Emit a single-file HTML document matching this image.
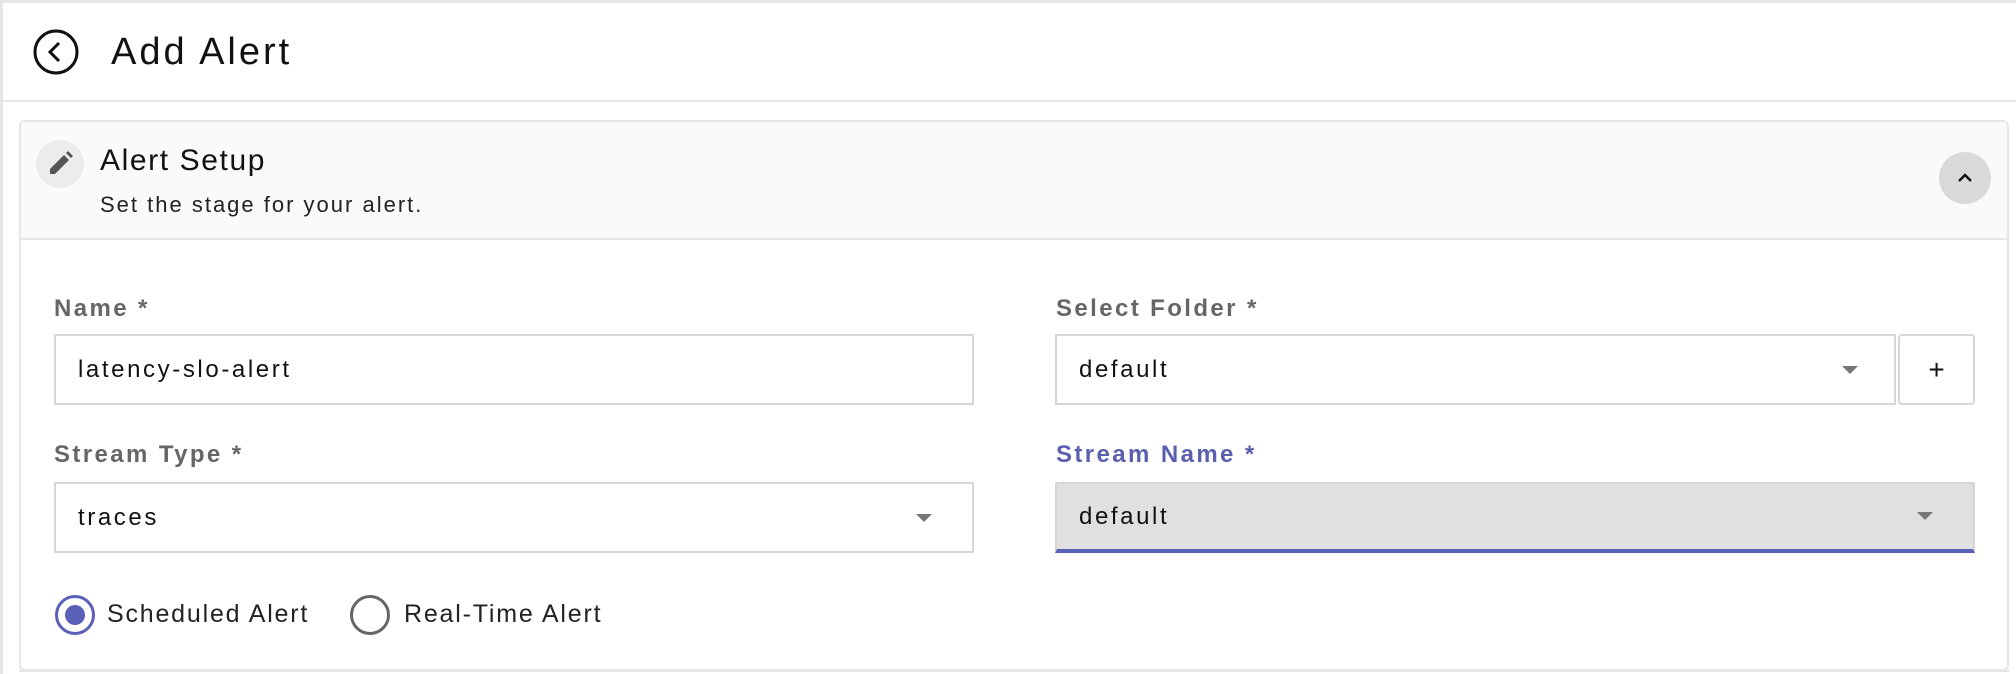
<!DOCTYPE html>
<html><head><meta charset="utf-8"><style>
*{box-sizing:border-box;margin:0;padding:0}
body{width:2016px;height:674px;overflow:hidden;background:#fff;font-family:"Liberation Sans",sans-serif;color:#1a1a1a;position:relative}
.abs{position:absolute}
.lbl{position:absolute;font-size:24px;font-weight:bold;color:#666;letter-spacing:2.4px}
.inp{position:absolute;border:2px solid #d6d6d6;background:#fff;font-size:24px;letter-spacing:2.6px;padding-left:22px;display:flex;align-items:center;color:#111}
.arrow{position:absolute;width:0;height:0;border-left:8px solid transparent;border-right:8px solid transparent;border-top:8px solid #777}
</style></head><body>
<div class="abs" style="left:0;top:0;width:2016px;height:3px;background:#e6e6e6"></div>
<div class="abs" style="left:0;top:0;width:3px;height:674px;background:#e6e6e6"></div>
<div class="abs" style="left:0;top:100px;width:2016px;height:2px;background:#e3e3e3"></div>
<svg class="abs" style="left:32px;top:29px" width="48" height="48" viewBox="0 0 48 48"><circle cx="24" cy="23" r="21" fill="none" stroke="#111" stroke-width="3"/><path d="M27 14 L18 23 L27 32" fill="none" stroke="#111" stroke-width="3"/></svg>
<div class="abs" style="left:111px;top:31px;font-size:38px;letter-spacing:3px;color:#111">Add Alert</div>

<div class="abs" style="left:19px;top:120px;width:1990px;height:551px;border:2px solid #e6e6e6;border-radius:6px;background:#fff"></div>
<div class="abs" style="left:21px;top:122px;width:1986px;height:118px;background:#fafafa;border-bottom:2px solid #e6e6e6;border-radius:6px 6px 0 0"></div>
<svg class="abs" style="left:36px;top:140px" width="48" height="48" viewBox="0 0 48 48"><circle cx="24" cy="24" r="24" fill="#ececec"/><path d="M14 34 L14 29 L28 15 L33 20 L19 34 Z M30 13 L32 11 L37 16 L35 18 Z" fill="#555"/></svg>
<div class="abs" style="left:100px;top:144px;font-size:30px;letter-spacing:1.6px;color:#111">Alert Setup</div>
<div class="abs" style="left:100px;top:192px;font-size:22px;letter-spacing:2px;color:#222">Set the stage for your alert.</div>
<svg class="abs" style="left:1939px;top:152px" width="52" height="52" viewBox="0 0 52 52"><circle cx="26" cy="26" r="26" fill="#d9d9d9"/><path d="M20 29 L26 23 L32 29" fill="none" stroke="#111" stroke-width="2.5"/></svg>

<div class="lbl" style="left:54px;top:295px">Name *</div>
<div class="inp" style="left:54px;top:334px;width:920px;height:71px">latency-slo-alert</div>
<div class="lbl" style="left:1056px;top:295px">Select Folder *</div>
<div class="inp" style="left:1055px;top:334px;width:841px;height:71px">default<div class="arrow" style="right:36px;top:30px"></div></div>
<div class="abs" style="left:1898px;top:334px;width:77px;height:71px;border:2px solid #d6d6d6;border-radius:4px;font-size:28px;display:flex;align-items:center;justify-content:center;color:#111">+</div>

<div class="lbl" style="left:54px;top:441px">Stream Type *</div>
<div class="inp" style="left:54px;top:482px;width:920px;height:71px">traces<div class="arrow" style="right:40px;top:30px"></div></div>
<div class="lbl" style="left:1056px;top:441px;color:#5a5fae">Stream Name *</div>
<div class="inp" style="left:1055px;top:482px;width:920px;height:71px;background:#e0e0e0;border-bottom:4px solid #5a5fb8">default<div class="arrow" style="right:40px;top:28px"></div></div>

<svg class="abs" style="left:52px;top:592px" width="46" height="46" viewBox="0 0 46 46"><circle cx="23" cy="23" r="18.5" fill="none" stroke="#5a5fb8" stroke-width="3"/><circle cx="23" cy="23" r="10" fill="#5a5fb8"/></svg>
<div class="abs" style="left:107px;top:600px;font-size:25px;letter-spacing:1.8px;color:#222">Scheduled Alert</div>
<svg class="abs" style="left:347px;top:592px" width="46" height="46" viewBox="0 0 46 46"><circle cx="23" cy="23" r="18.5" fill="none" stroke="#666" stroke-width="3"/></svg>
<div class="abs" style="left:404px;top:600px;font-size:25px;letter-spacing:1.8px;color:#222">Real-Time Alert</div>
<div class="abs" style="left:19px;top:670px;width:1990px;height:4px;border-top:2px solid #e6e6e6"></div>
</body></html>
